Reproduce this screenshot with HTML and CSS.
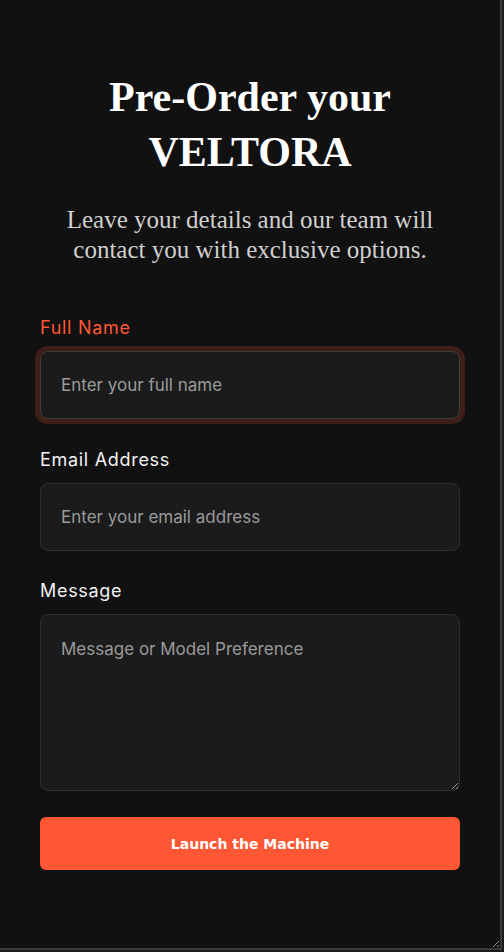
FILE: index.html
```html
<!DOCTYPE html>
<html lang="en">
<head>
<meta charset="utf-8">
<title>Pre-Order VELTORA</title>
<link rel="stylesheet" href="styles.css">
</head>
<body>
<div class="page">
  <h1 class="title">Pre-Order your VELTORA</h1>
  <p class="subtitle">Leave your details and our team will contact you with exclusive options.</p>
  <form class="form">
    <div class="field">
      <label class="label label-active" for="name">Full Name</label>
      <input class="input input-focus" id="name" type="text" placeholder="Enter your full name">
    </div>
    <div class="field field-mid">
      <label class="label" for="email">Email Address</label>
      <input class="input" id="email" type="email" placeholder="Enter your email address">
    </div>
    <div class="field field-last">
      <label class="label" for="msg">Message</label>
      <textarea class="input textarea" id="msg" placeholder="Message or Model Preference"></textarea>
    </div>
    <button class="button" type="button">Launch the Machine</button>
  </form>
</div>
</body>
</html>
```
FILE: styles.css
```css
* { box-sizing: border-box; }
html, body { margin: 0; padding: 0; }
body { background: #1c1c1c; }
.page {
  width: 502px;
  height: 950px;
  background: #111111;
  border-right: 2px solid #3a3a3a;
  border-bottom: 2px solid #3a3a3a;
  padding: 70px 40px 0 40px;
  resize: both;
  overflow: auto;
}
.title {
  margin: 0 auto 25px;
  width: 320px;
  text-align: center;
  font-family: "Liberation Serif", "DejaVu Serif", serif;
  font-weight: 700;
  font-size: 42px;
  line-height: 55px;
  color: #ffffff;
}
.subtitle {
  margin: 0 0 50px;
  text-align: center;
  font-family: "Liberation Serif", "DejaVu Serif", serif;
  font-size: 25px;
  line-height: 30px;
  color: #cfcfcf;
}
.form { display: flex; flex-direction: column; }
.field { display: flex; flex-direction: column; margin-bottom: 28px; }
.field-mid { margin-bottom: 27px; }
.field-last { margin-bottom: 26px; }
.label {
  font-family: "Inter", "Open Sans", sans-serif;
  font-size: 18px;
  letter-spacing: 0.7px;
  line-height: 26px;
  color: #f2f2f2;
  margin-bottom: 10px;
}
.label-active { color: #ff5733; }
.input {
  display: block;
  width: 420px;
  height: 68px;
  padding: 0 20px;
  background: #1b1b1b;
  border: 1px solid #2e2e2e;
  border-radius: 8px;
  color: #eeeeee;
  font-family: "Inter", "Open Sans", sans-serif;
  font-size: 17px;
  outline: none;
  margin: 0;
}
.input::placeholder { color: #9a9a9a; }
.input-focus {
  border-color: #3c3c3c;
  box-shadow: 0 0 0 5px #3e1f18;
}
.textarea {
  height: 177px;
  padding: 22px 20px;
  line-height: 24px;
  resize: vertical;
}
.button {
  width: 420px;
  height: 53px;
  border: none;
  border-radius: 6px;
  background: #ff5733;
  color: #ffffff;
  font-family: "DejaVu Sans", sans-serif;
  font-weight: 700;
  font-size: 14px;
  cursor: pointer;
}
```
